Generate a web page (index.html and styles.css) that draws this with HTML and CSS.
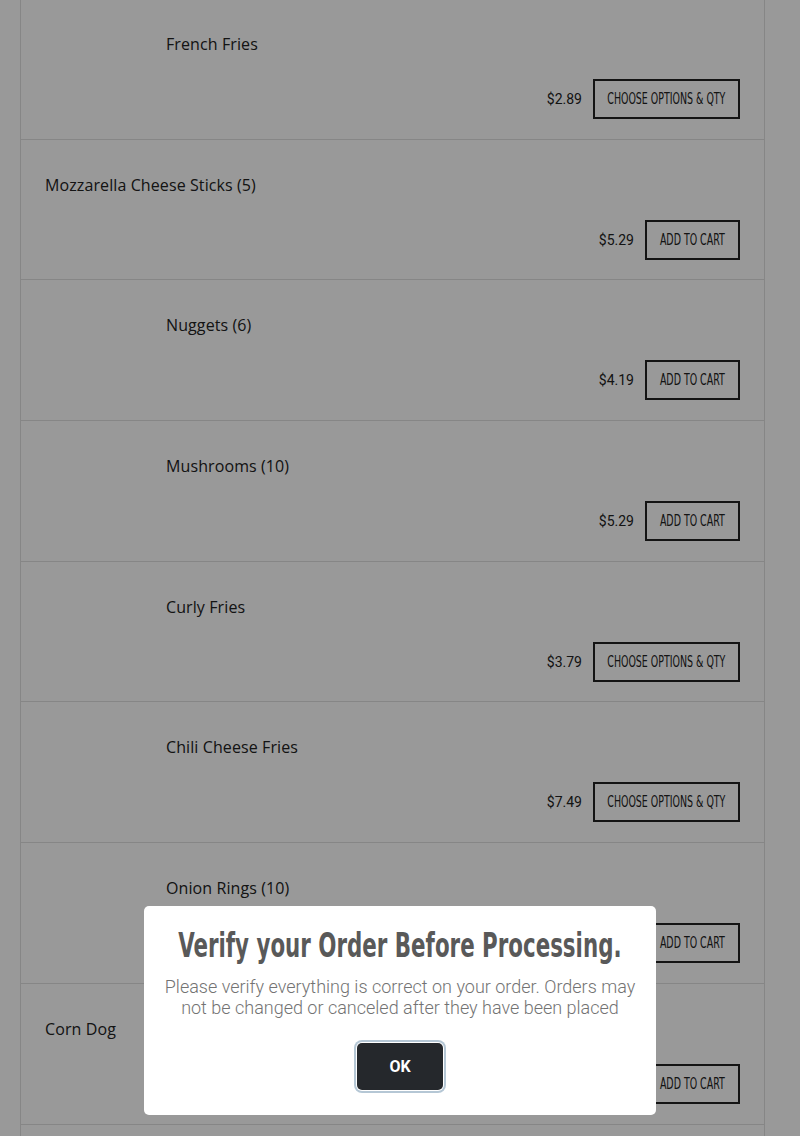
FILE: index.html
```html
<!DOCTYPE html>
<html lang="en">
<head>
  <meta charset="UTF-8" />
  <meta name="viewport" content="width=device-width, initial-scale=1.0"/>
  <title>Menu - Sides</title>
  <link rel="stylesheet" href="styles.css">
</head>
<body>
  <div class="menu-list">
    <div class="menu-item">
      <div class="item-head">
        <div class="item-thumb"></div>
        <div class="item-name">French Fries</div>
      </div>
      <div class="item-foot">
        <span class="item-price">$2.89</span>
        <button class="btn-outline options"><span>Choose Options &amp; Qty</span></button>
      </div>
    </div>

    <div class="menu-item">
      <div class="item-head">
        <div class="item-name">Mozzarella Cheese Sticks (5)</div>
      </div>
      <div class="item-foot">
        <span class="item-price">$5.29</span>
        <button class="btn-outline"><span>Add to Cart</span></button>
      </div>
    </div>

    <div class="menu-item">
      <div class="item-head">
        <div class="item-thumb"></div>
        <div class="item-name">Nuggets (6)</div>
      </div>
      <div class="item-foot">
        <span class="item-price">$4.19</span>
        <button class="btn-outline"><span>Add to Cart</span></button>
      </div>
    </div>

    <div class="menu-item">
      <div class="item-head">
        <div class="item-thumb"></div>
        <div class="item-name">Mushrooms (10)</div>
      </div>
      <div class="item-foot">
        <span class="item-price">$5.29</span>
        <button class="btn-outline"><span>Add to Cart</span></button>
      </div>
    </div>

    <div class="menu-item">
      <div class="item-head">
        <div class="item-thumb"></div>
        <div class="item-name">Curly Fries</div>
      </div>
      <div class="item-foot">
        <span class="item-price">$3.79</span>
        <button class="btn-outline options"><span>Choose Options &amp; Qty</span></button>
      </div>
    </div>

    <div class="menu-item">
      <div class="item-head">
        <div class="item-thumb"></div>
        <div class="item-name">Chili Cheese Fries</div>
      </div>
      <div class="item-foot">
        <span class="item-price">$7.49</span>
        <button class="btn-outline options"><span>Choose Options &amp; Qty</span></button>
      </div>
    </div>

    <div class="menu-item">
      <div class="item-head">
        <div class="item-thumb"></div>
        <div class="item-name">Onion Rings (10)</div>
      </div>
      <div class="item-foot">
        <span class="item-price">$5.29</span>
        <button class="btn-outline"><span>Add to Cart</span></button>
      </div>
    </div>

    <div class="menu-item">
      <div class="item-head">
        <div class="item-name">Corn Dog</div>
      </div>
      <div class="item-foot">
        <span class="item-price">$2.49</span>
        <button class="btn-outline"><span>Add to Cart</span></button>
      </div>
    </div>
  </div>

  <div class="modal-backdrop"></div>

  <div class="modal">
    <h2 class="modal-title"><span>Verify your Order Before Processing.</span></h2>
    <p class="modal-text">Please verify everything is correct on your order. Orders may not be changed or canceled after they have been placed</p>
    <button class="btn-confirm">OK</button>
  </div>
</body>
</html>
```

FILE: styles.css
```css
* {
  margin: 0;
  padding: 0;
  box-sizing: border-box;
}

:root {
  --texto: #222222;
  --linha: #e0e0e0;
  --branco: #ffffff;
  --escuro: #25282c;
  --cinza-texto: #737373;
  --titulo: #595959;
  --condensada: "Liberation Sans Narrow", "DejaVu Sans Condensed", sans-serif;
}

body {
  font-family: "Open Sans", Arial, sans-serif;
  background-color: var(--branco);
  color: var(--texto);
}

/* Lista do menu */
.menu-list {
  width: 745px;
  margin: -1px 0 0 20px;
  border-left: 1px solid var(--linha);
  border-right: 1px solid var(--linha);
  padding-bottom: 40px;
}

.menu-item {
  padding: 33px 24px 19.7px;
  border-bottom: 1px solid var(--linha);
}

.item-head {
  display: flex;
  align-items: center;
}

.item-thumb {
  width: 97px;
  margin-right: 24px;
}

.item-name {
  font-size: 16px;
  line-height: 24px;
  letter-spacing: 0.1px;
}

.item-foot {
  margin-top: 23px;
  display: flex;
  justify-content: flex-end;
  align-items: center;
  gap: 11px;
}

.item-price {
  font-family: Roboto, Arial, sans-serif;
  font-size: 14px;
}

/* fonte condensada: sem Oswald, a largura vem do scaleX */
.btn-outline {
  width: 95px;
  height: 40px;
  display: flex;
  justify-content: center;
  align-items: center;
  font-family: var(--condensada);
  font-size: 15px;
  text-transform: uppercase;
  white-space: nowrap;
  color: var(--texto);
  background-color: transparent;
  border: 2px solid var(--texto);
  cursor: pointer;
}

.btn-outline.options {
  width: 147px;
}

.btn-outline span {
  display: inline-block;
  transform: scaleX(0.7);
}

/* Modal */
.modal-backdrop {
  position: fixed;
  inset: 0;
  background-color: rgba(0, 0, 0, 0.4);
}

.modal {
  position: fixed;
  left: 50%;
  bottom: 21px;
  width: 512px;
  transform: translateX(-50%);
  background-color: var(--branco);
  border-radius: 5px;
  padding: 20px 20px 25px;
  text-align: center;
}

.modal-title {
  display: flex;
  justify-content: center;
  font-family: var(--condensada);
  font-size: 33px;
  line-height: 40px;
  font-weight: 700;
  white-space: nowrap;
  color: var(--titulo);
}

.modal-title span {
  display: inline-block;
  transform: scaleX(0.72);
}

.modal-text {
  margin-top: 10px;
  font-family: Roboto, Arial, sans-serif;
  font-weight: 300;
  font-size: 18px;
  line-height: 21px;
  color: var(--cinza-texto);
}

.btn-confirm {
  margin-top: 25px;
  font-family: Roboto, Arial, sans-serif;
  font-weight: 700;
  font-size: 16px;
  line-height: 21px;
  color: var(--branco);
  background-color: var(--escuro);
  border: none;
  border-radius: 5px;
  padding: 13px 32px;
  box-shadow: 0 0 0 1px var(--branco), 0 0 0 3px #b5c7d5;
  cursor: pointer;
}
```
